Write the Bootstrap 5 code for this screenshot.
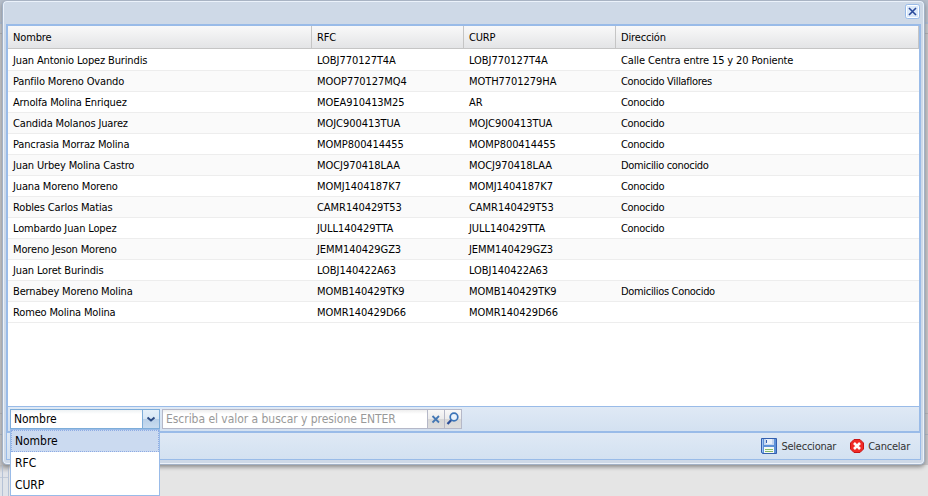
<!DOCTYPE html>
<html lang="es">
<head>
<meta charset="utf-8">
<title>Buscar</title>
<link href="https://cdn.jsdelivr.net/npm/bootstrap@5.3.0/dist/css/bootstrap.min.css" rel="stylesheet">
<style>
body{width:928px;height:496px;overflow:hidden;background:#e5e5e5;font:11px/13px "DejaVu Sans Condensed","DejaVu Sans",sans-serif;color:#000;letter-spacing:-.15px}
.page-strip{height:465px;background:linear-gradient(#b6bfcc 0 22px,#a9bdd6 22px 24px,#c6c8cc 24px 33px,#aaacb0 33px 34px,#c6c6c9 34px 413px,#b0b2b6 413px 414px,#c6c6c9 414px 434px,#aab4c2 434px 435px,#c6c6c9 435px)}
.page-foot{width:9px;height:31px;background:linear-gradient(#b9b9bb,#dfe2e8 8px 12px,#c3cbd8 12px 13px,#dfe3e9 13px);border-right:1px solid #b5c2d6}
.page-foot>div{width:3px;border-right:1px solid #b5c2d6}
.win{left:2px;top:0;width:923px;height:465px;background:#ced9e7;border:1px solid #a2b1c5;border-radius:5px;box-shadow:inset 0 0 0 1px #ebf2fb,0 2px 4px #888;padding:0 3px 3px;border-top-color:#a9b4c4}
.title-row{height:23px;padding:3px 1px 0}
.close-x{width:15px;height:15px}
.frame{border:2px solid #99bbe8;height:409px}
.heads{height:23px;background:linear-gradient(#f9f9f9,#e3e4e6);border-bottom:1px solid #c5c5c5}
.heads>div{border-right:1px solid #c5c5c5;padding:5px 5px 0}
.c1{width:304px}.c2,.c3{width:152px}.c4{width:303px}
.rows{height:357px;background:#fff;padding-top:1px}
.line{height:21px;border-bottom:1px solid #ededed}
.line:nth-child(even){background:#fafafa}
.line>div{padding:4px 5px 0}
.line .c2,.line .c3{letter-spacing:-.05px}
.line .c4{letter-spacing:-.32px}
.line:first-child .c4{letter-spacing:-.13px}
.bar{height:25px;background:linear-gradient(#dfe9f5,#d3e1f1);border-top:1px solid #99bbe8;padding:2px}
.foot{height:27px;background:linear-gradient(#dfe9f5,#d3e1f1);border:1px solid #99bbe8;border-top:0;padding:0 10px 0 0}
.combo,.find,.opts{font-size:12px;line-height:14px;letter-spacing:-.04px}
.combo{width:150px;height:20px;background:linear-gradient(#eef2f4,#fff 4px);border:1px solid #7eadd9}
.find{width:300px;height:20px;background:linear-gradient(#eee,#fff 4px);border:1px solid #b5b8c8;margin-left:2px;color:#999}
.entry{padding:2px 3px 0}
.trig{width:17px;height:18px;background:linear-gradient(#f8f8f8,#ececec 48%,#d8d8d8 52%,#dedede);border-left:1px solid #b5b8c8}
.combo .trig{background:linear-gradient(#e4f0fa,#d8e8f6 48%,#b9d0e8 52%,#c8dcf0);border-color:#7eadd9}
.trig svg,.foot svg{display:block}
.opts{left:10px;top:429px;width:150px;height:67px;background:#fff;border:1px solid #99bbe8}
.opts>div{height:22px;padding:4px 4px 0}
.opts>.on{background:#cbdaf0;outline:1px dotted #8eabe4;outline-offset:-1px}
.foot span{color:#333;padding-top:1px;letter-spacing:-.23px;margin-left:4px}
.cancel-ico{margin-left:14px}
</style>
</head>
<body>
<div class="page-strip"></div>
<div class="page-foot"><div class="h-100"></div></div>
<div class="win position-absolute">
<div class="title-row d-flex justify-content-end"><svg class="close-x" viewBox="0 0 15 15"><rect x=".5" y=".5" width="14" height="14" rx="2" fill="#c9def8" stroke="#99bbe8"/><rect x="1.5" y="1.5" width="12" height="12" rx="1" fill="#dbe9fa" stroke="#fff"/><path d="M4 4l7 7M11 4l-7 7" stroke="#2b4a9a" stroke-width="1.6"/></svg></div>
<div class="frame">
<div class="heads d-flex"><div class="c1">Nombre</div><div class="c2">RFC</div><div class="c3">CURP</div><div class="c4">Dirección</div></div>
<div class="rows" id="rows"></div>
<div class="bar d-flex">
<div class="combo d-flex"><div class="entry flex-grow-1">Nombre</div><div class="trig"><svg width="16" height="18" viewBox="0 0 16 18"><path d="M4.500 7.500L8 10.500l3.500-3" fill="none" stroke="#2d4c84" stroke-width="2"/></svg></div></div>
<div class="find d-flex"><div class="entry flex-grow-1">Escriba el valor a buscar y presione ENTER</div>
<div class="trig"><svg width="16" height="18" viewBox="0 0 16 18"><path d="M4.500 6l6.500 6.500M11 6l-6.500 6.500" stroke="#4478b4" stroke-width="1.800"/></svg></div>
<div class="trig"><svg width="16" height="18" viewBox="0 0 16 18"><path d="M2.500 14l4-4.200" stroke="#2b4e98" stroke-width="2.300"/><circle cx="9" cy="7" r="3.800" fill="#eaf3fc" stroke="#3b74b8" stroke-width="1.700"/></svg></div></div>
</div>
</div>
<div class="foot d-flex align-items-center justify-content-end">
<svg width="16" height="16" viewBox="0 0 16 16"><path d="M.5.5h15v15h-14l-1-1z" fill="#5d91d8" stroke="#345fae"/><path d="M1.500 1v13" stroke="#9fc4f2"/><path d="M3 1h10v6H3z" fill="#e9f0fa"/><path d="M3 1h2v5h6V1h2v6H3z" fill="#c4d6ef"/><path d="M5 2h1v3H5z" fill="#345fae"/><path d="M3 9h10v6H3z" fill="#f7faf4"/><path d="M4 11.500h8M4 13.500h8" stroke="#86bc67"/></svg>
<span>Seleccionar</span>
<svg class="cancel-ico" width="14" height="14" viewBox="0 0 14 14"><path d="M4 .5h6L13.500 4v6L10 13.500H4L.5 10V4z" fill="#f02a26" stroke="#c81414"/><path d="M4 4l6 6M10 4l-6 6" stroke="#fff" stroke-width="2.600"/></svg>
<span>Cancelar</span></div>
</div>
<div class="opts position-absolute"><div class="on">Nombre</div><div>RFC</div><div>CURP</div></div>
<script>
const data=[
["Juan Antonio Lopez Burindis","LOBJ770127T4A","LOBJ770127T4A","Calle Centra entre 15 y 20 Poniente"],
["Panfilo Moreno Ovando","MOOP770127MQ4","MOTH7701279HA","Conocido Villaflores"],
["Arnolfa Molina Enriquez","MOEA910413M25","AR","Conocido"],
["Candida Molanos Juarez","MOJC900413TUA","MOJC900413TUA","Conocido"],
["Pancrasia Morraz Molina","MOMP800414455","MOMP800414455","Conocido"],
["Juan Urbey Molina Castro","MOCJ970418LAA","MOCJ970418LAA","Domicilio conocido"],
["Juana Moreno Moreno","MOMJ1404187K7","MOMJ1404187K7","Conocido"],
["Robles Carlos Matias","CAMR140429T53","CAMR140429T53","Conocido"],
["Lombardo Juan Lopez","JULL140429TTA","JULL140429TTA","Conocido"],
["Moreno Jeson Moreno","JEMM140429GZ3","JEMM140429GZ3",""],
["Juan Loret Burindis","LOBJ140422A63","LOBJ140422A63",""],
["Bernabey Moreno Molina","MOMB140429TK9","MOMB140429TK9","Domicilios Conocido"],
["Romeo Molina Molina","MOMR140429D66","MOMR140429D66",""]];
document.getElementById("rows").innerHTML=data.map(r=>`<div class="line d-flex">${r.map((t,i)=>`<div class="c${i+1}">${t}</div>`).join("")}</div>`).join("");
</script>
<script src="https://cdn.jsdelivr.net/npm/bootstrap@5.3.0/dist/js/bootstrap.bundle.min.js"></script>
</body>
</html>
